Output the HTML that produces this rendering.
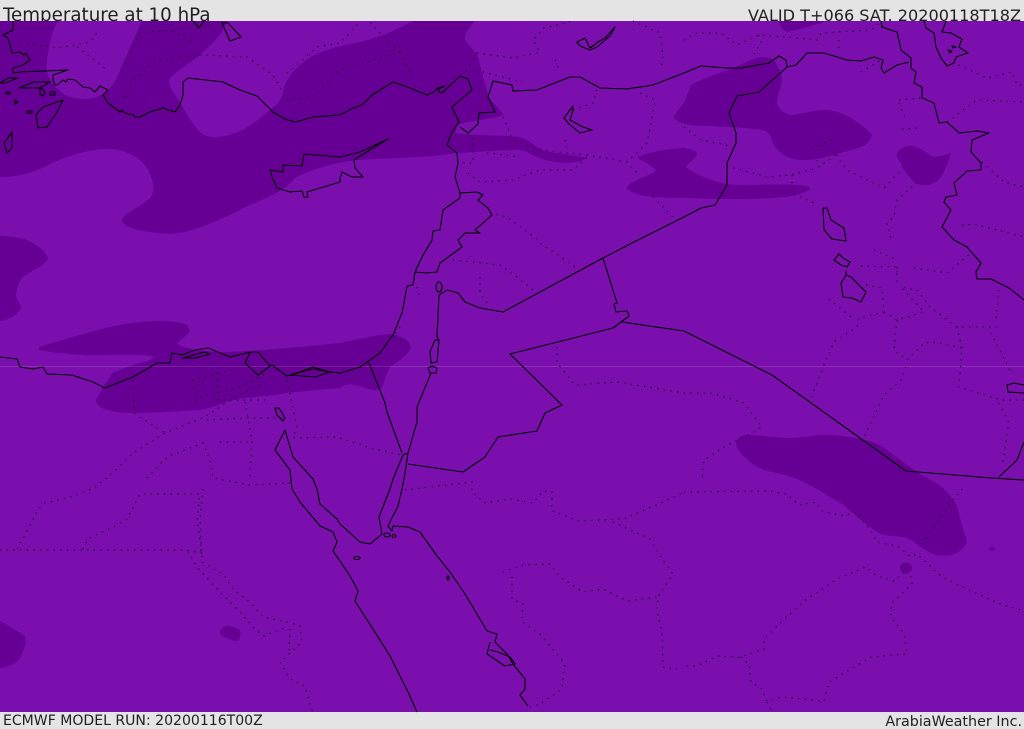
<!DOCTYPE html>
<html><head><meta charset="utf-8"><title>Temperature at 10 hPa</title>
<style>html,body{margin:0;padding:0;background:#e4e4e4;width:1024px;height:729px;overflow:hidden}svg{display:block}text{font-family:"DejaVu Sans","Liberation Sans",sans-serif;fill:#1f1f1f}</style></head>
<body>
<svg width="1024" height="729" viewBox="0 0 1024 729" xmlns="http://www.w3.org/2000/svg">
<rect width="1024" height="729" fill="#e4e4e4"/>
<text x="3" y="21" font-size="18.25">Temperature at 10 hPa</text>
<text x="1021" y="21" font-size="16.1" text-anchor="end">VALID T+066 SAT. 20200118T18Z</text>
<text x="3" y="725" font-size="14.05">ECMWF MODEL RUN: 20200116T00Z</text>
<text x="1022" y="726" font-size="14.3" text-anchor="end">ArabiaWeather Inc.</text>
<rect y="21" width="1024" height="691" fill="#7b0fae"/>
<g fill="#660094">
<path d="M0 21L58 21C52 30 48 45 46 70C50 82 57 90 65 95C77 100 90 100 97 97C105 93 113 88 118 75C125 60 135 35 142 21L227 21C222 35 213 43 200 55C190 63 175 72 170 78C168 84 170 88 175 95C185 110 192 125 200 132C205 137 213 138 225 136C245 132 258 120 270 110C278 104 283 98 283 90C288 75 300 62 315 55C325 50 333 48 345 45C365 42 385 35 395 30C405 25 410 23 413 21L475 21C468 28 464 35 465 40C470 47 476 52 478 57C480 65 482 72 483 77C485 85 487 92 490 99C495 105 500 110 504 115C490 120 470 120 458 125L455 133C475 136 500 135 520 137C530 140 535 147 545 151C560 154 575 155 587 158C580 163 565 164 550 161C535 158 530 152 520 150C500 150 480 152 457 153C430 157 400 158 375 159C345 160 320 165 295 178C285 190 270 197 250 205C235 212 215 223 195 229C180 234 170 235 150 232C135 230 122 226 122 220C125 212 140 208 150 198C157 190 152 178 148 170C142 158 125 148 105 149C85 150 65 157 50 164C35 172 20 177 0 177Z"/>
<path d="M684 103L691 85C705 78 720 73 734 68C745 63 755 57 764 57C770 57 774 60 776 63C780 70 782 75 782 82C780 90 777 95 777 103C779 110 785 115 793 115C805 113 815 110 827 110C838 111 845 115 851 118C860 124 868 130 872 135C870 142 865 146 858 148C850 151 842 152 834 155C825 157 815 160 805 160C795 160 788 158 784 155C776 150 772 143 771 137C768 132 765 130 755 129C740 127 725 127 710 126C695 126 680 125 674 118C675 113 680 108 684 103Z"/>
<path d="M684 148C690 149 697 151 697 154C695 160 688 162 686 167C695 174 705 178 717 182C725 184 733 185 741 185C760 185 780 184 801 185C806 186 810 187 810 189C805 193 795 196 784 197C765 199 745 199 724 199C710 199 695 198 684 198C665 198 650 197 640 195C633 193 627 190 627 187C630 182 645 177 655 172C658 170 650 165 645 162C640 160 637 158 638 157C650 152 665 149 684 148Z"/>
<path d="M897 153C900 149 905 146 911 146C918 146 925 152 931 156C938 158 945 155 951 153C948 163 945 170 941 177C937 182 932 185 926 185C920 185 916 184 914 182C908 175 902 170 901 163C898 160 896 157 897 153Z"/>
<path d="M0 236C10 236 20 238 27 240C38 245 46 252 48 258C46 265 32 270 23 277C18 283 16 290 16 297C18 302 21 305 21 308C18 315 8 320 0 321Z"/>
<path d="M39 347C60 341 85 333 110 327C128 323 145 321 160 321C172 321 183 323 187 325C190 329 190 331 188 333C185 337 180 340 177 343C180 346 183 347 187 348C200 351 213 352 227 352C260 351 300 347 340 343C356 340 373 335 390 334C400 335 405 338 408 342C411 346 411 348 410 350C405 357 397 362 390 367C386 374 384 382 382 388C378 390 375 390 373 390C365 388 358 385 350 384C345 385 343 386 340 388C325 389 305 391 287 393C270 396 250 397 233 400C222 403 212 408 200 410C178 411 155 413 133 413C120 413 108 411 100 407C97 404 96 402 96 400C100 392 106 382 113 373C125 367 138 364 150 360C153 358 154 357 153 356C145 355 140 355 133 355C115 354 100 356 83 355C68 354 50 352 39 350Z"/>
<path d="M736 443C738 438 741 435 746 435C760 435 775 438 791 438C802 438 813 435 824 435C837 435 850 437 861 439C870 441 878 444 884 448C898 458 912 470 927 478C935 483 940 485 944 489C950 495 954 500 957 506C960 518 963 530 967 541C965 547 960 552 954 554C948 556 942 556 937 555C930 553 923 549 917 544C912 540 908 538 904 537C895 536 888 536 881 534C873 530 865 523 857 517C850 511 845 505 837 501C830 497 823 493 817 489C810 485 802 481 794 478C785 474 775 473 764 470C755 466 746 460 741 453C738 449 736 446 736 443Z"/>
<path d="M0 621C8 625 17 631 25 636C26 640 26 643 25 646C23 652 20 658 17 662C12 665 5 668 0 668Z"/>
<path d="M220 632C221 628 224 626 227 626C232 626 237 628 240 631C241 635 240 639 238 641C235 642 232 640 230 639C226 638 220 636 220 632Z"/>
<path d="M778 21L827 21C815 25 800 29 787 32C783 30 780 26 778 21Z"/>
<ellipse cx="906" cy="568" rx="6" ry="5.5"/>
<ellipse cx="992" cy="549" rx="3" ry="2"/>
</g>
<rect y="366" width="1024" height="1" fill="#fff" opacity=".13"/>
<g fill="none" stroke="#000" stroke-width="1.1" stroke-linejoin="round">
<path d="M13 21L13 30L3 35L8 38L12 53L20 52L24 55L26 53L30 60L23 65L13 68L13 73L20 72L68 70L53 75L53 80L55 85L57 85L63 80L66 82L68 79L75 80L83 87L90 88L95 92L100 86L108 90L103 95L108 103L120 112L122 110L125 113L133 115L135 117L140 117L150 112L163 108L175 112L180 105L183 95L183 82L188 78L223 82L240 90L257 96L273 112L285 119L295 122L313 117L340 115L353 108L362 105L372 95L393 82L405 86L427 95L434 92L438 88L445 86L438 89L440 93L442 93L460 76L468 79L472 90L452 107L459 122L452 132L447 145L457 153L458 163L455 177L460 193L460 198L443 210L440 230L433 231L432 240L422 257L415 272L413 285L407 286L402 313L393 335L380 353L360 367L340 373L330 372L313 367L300 372L287 376L272 365L270 366L258 352L250 352L230 357L208 348L195 350L182 355L172 353L170 363L157 363L133 377L105 388L93 382L72 375L47 374L43 367L33 369L20 367L17 359L0 357"/>
<path d="M460 127L468 133L478 124L479 113L495 112L488 97L493 81L512 85L513 91L537 90L570 77L580 77L600 88L627 89L653 85L684 73L701 66L727 68L741 68L769 63L779 56L786 60L787 67L796 65L807 53L824 53L847 60L861 61L874 57L883 60L881 68L884 73L897 65L909 62"/>
<path d="M881 21L882 27L897 32L901 50L911 58L911 68L916 72L914 83L922 87L922 98L934 103L939 123L947 122L959 133L977 131L989 133L972 140L971 152L981 163L981 170L967 171L954 183L957 195L946 197L944 202L951 210L942 227L954 240L967 247L981 263L976 272L977 279L991 279L1009 288L1024 300"/>
<path d="M787 67L759 92L737 96L729 113L736 133L736 143L727 163L727 185L715 205L701 208L684 217L638 240L603 258L503 312L480 308L465 302L458 293L447 290L439 295L437 337L439 340"/>
<path d="M603 258L617 303L614 304L616 312L627 311L629 316L613 328L510 354L562 405L545 413L537 431L498 437L485 457L463 472L408 464"/>
<path d="M622 322L684 331L772 375L906 471L991 478L1024 480M999 477L1017 460L1024 442"/>
<path d="M460 193L477 192L483 195L478 200L488 208L492 215L475 230L480 233L465 233L459 239L458 240L462 247L440 263L437 272L427 273L415 272"/>
<path d="M285 430L275 450L290 470L292 489L300 502L320 526L333 532L337 542L333 551L340 561L350 576L358 591L355 601L373 629L390 656L408 692L417 712"/>
<path d="M285 430L293 457L313 479L317 489L320 504L337 519L340 524L360 542L370 544L382 534L379 517L390 489L393 479L403 455L408 453L405 473L402 489L398 506L388 526L392 531L393 526L408 527L420 532L437 556L450 572L465 594L487 631L497 634L495 642L507 654L513 664L525 679L525 689L520 695L528 706"/>
<path d="M490 642L487 654L505 666L515 664L510 657L498 652L490 650M369 363L385 403L387 412L402 453M439 340L435 340L430 352L431 363L437 362ZM428 368L430 373L436 373L437 368L432 366ZM431 373L417 407L417 422L408 453"/>
<ellipse cx="439" cy="287" rx="3" ry="5"/>
<path d="M270 170L283 172L283 165L302 166L304 154L340 157L360 152L388 139L365 153L354 160L355 168L363 177L352 177L342 172L340 178L340 182L307 192L308 197L304 197L302 191L290 192L277 188L272 177Z"/>
<path d="M63 100L57 112L47 127L38 128L36 115L43 107ZM12 132L4 143L7 153L12 148ZM222 23L228 23L241 37L230 41ZM193 21L199 28L204 21M0 83L8 78L18 78L5 83ZM19 88L34 82L50 82L40 88ZM40 87L45 92L43 96L40 94ZM27 111H32V113H27ZM6 92h4v2h-4ZM15 100l3 2-3 2ZM50 92h5v3h-5Z"/>
<path d="M577 42L585 38L590 48L598 42L605 38L615 27L610 36L597 47L590 50L580 46ZM573 106L564 118L570 125L580 133L592 130L583 127L570 120L573 110Z"/>
<path d="M924 21L926 28L934 33L936 47L941 58L947 66L954 63L956 57L968 53L959 47L962 39L951 33L942 32L946 21M948 50l4 1-2 2zM952 46l4 1-3 1z"/>
<path d="M823 208L827 208L831 220L844 228L846 241L832 239L824 230ZM834 260L839 254L843 258L850 262L847 267L841 265ZM846 271L846 275L851 277L866 292L861 302L852 298L843 297L841 283L846 275ZM1024 385L1014 383L1007 385L1008 392L1024 393"/>
<path d="M182 358L205 352L210 354L195 358ZM250 352L245 363L258 375L270 366M290 375L313 369L330 372L315 377Z"/>
<ellipse cx="357" cy="558" rx="3" ry="1.5"/><ellipse cx="387" cy="535" rx="3" ry="2"/><ellipse cx="394" cy="536" rx="2" ry="1.5"/><ellipse cx="448" cy="578" rx="1" ry="2"/><path d="M275 408l4 0 6 10-2 3-6-6z"/>
</g>
<g fill="none" stroke="#000" stroke-width="1" stroke-dasharray="1.2 5.5">
<path d="M0 550L185 550L202 553M17 549L27 531L38 509L45 503L70 497L92 489L107 478L133 453L165 433L205 417L230 400L260 385M83 549L88 539L113 527L127 519L140 494L200 494L197 521L202 551L188 552L197 567L220 592L240 612L253 627L263 636L287 627M203 489L200 520L202 562L223 574L233 589L250 602L263 617L287 622L300 626L302 642L287 656L280 662L290 679L305 686L312 711M290 629L289 652"/>
<path d="M133 380L134 413L165 433M147 478L167 457L203 443L210 460L213 478L250 485L290 483M192 380L197 403M217 372L218 400M192 380L233 370M200 397L240 387L267 373M207 420L250 418L283 418M217 400L267 400M245 402L252 440L250 478M220 442L250 442M287 380L297 427L293 438L337 437L370 448L402 455"/>
<path d="M20 43L58 48L90 42L97 33M77 47L107 70M122 70L140 33L170 30L197 45M125 98L133 80L157 60L203 55L247 57L273 75L283 93M287 100L313 97L340 70L373 60L400 52L380 33L370 22M287 73L317 47L340 43L360 22M400 52L412 78M477 53L513 58L540 52L533 40L543 28L570 22M477 53L465 72L483 72L522 82M555 60L560 72M633 21L660 33L663 55L661 70M597 90L593 103L573 110M640 93L655 100L653 113L647 143L627 162L637 173M503 117L513 140L540 150L587 155L627 162M473 138L473 163L460 163M468 173L480 182L513 180L540 170L573 170L587 157M487 153L520 157M565 140L567 150M490 213L507 217L537 239L540 243L577 268M653 197L673 217"/>
<path d="M453 260L500 265L517 277L533 290M480 277L480 293L487 303M417 287L420 300M400 327L393 337L407 343M557 347L557 363L575 385L617 382L684 393L711 393L744 403L762 427L752 433L724 447L704 460L702 478"/>
<path d="M684 40L697 33L721 33L737 45L759 35L784 37L817 40L821 33L871 30L881 22M759 35L761 43L752 57M839 40L839 52M861 72L881 60M899 100L921 98M899 103L906 120M902 129L919 128M947 122L967 107L977 100L1024 102M959 65L987 78L1012 72L1017 85L1024 85M982 162L1004 182L1024 187M962 225L974 224L1024 237M684 127L701 140L731 146M727 166L767 177L792 175L817 168L836 155M812 148L837 138M817 160L819 167M836 155L847 170L884 188L901 170M792 175L792 193L814 203M917 182L897 200L894 217L887 223L891 239"/>
<path d="M874 250L897 260M861 266L897 267L897 273M914 268L947 273L971 253M866 285L882 288L884 312L859 318L857 327L834 342L824 365L811 398M829 299L851 317M884 312L897 320L924 312L901 287L917 290L931 308L957 327L1001 327M897 267L897 287M897 320L894 350L907 360L924 343L934 342L962 348L959 387L1001 400L1024 400M957 327L962 348M999 290L996 320M991 333L1011 372M906 367L901 380L884 395L864 437M999 403L1009 423L1002 467"/>
<path d="M684 492L767 491L787 494L799 505L816 502L822 511L844 516L856 512L871 531L877 542L897 546L911 557L917 554L942 577L971 591L1001 604L1024 611M922 544L954 499L962 489M904 572L894 581L877 576L866 567L837 579L804 601L781 622L764 639L764 649L741 657L717 656L697 666L684 666M911 576L912 584L891 604L891 617L904 634L907 654L871 657L829 682L824 701L781 697L767 702L772 711M741 657L749 664L751 682L762 689L767 702"/>
<path d="M405 490L472 482L472 492L485 503L510 499L533 503L543 491L552 492L552 511L580 521L623 519L663 502L684 492M613 522L650 539L660 556L673 574L658 597L657 612L662 632L663 667L677 669M503 572L523 565L550 564L560 577L583 592L603 589L627 601L658 597M512 577L512 599L523 604L522 622L540 634L565 664L562 689L540 704L530 707"/>
</g>
</svg>
</body></html>
